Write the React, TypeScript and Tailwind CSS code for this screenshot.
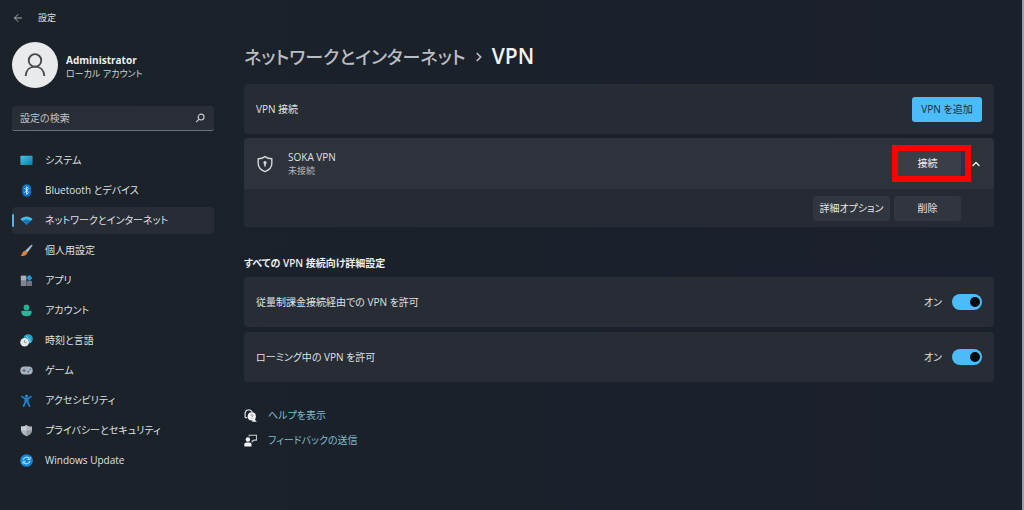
import React, { useState } from 'react';
import { ArrowLeft, ChevronRight, ChevronUp } from 'lucide-react';

type PageId = 'system' | 'bluetooth' | 'network' | 'personal' | 'apps' | 'accounts' | 'time' | 'game' | 'access' | 'privacy' | 'update';

/* ---- Icons ---- */

const Icon: React.FC<{ children: React.ReactNode }> = ({ children }) => (
  <svg viewBox="0 0 16 16" className="w-[13px] h-[13px] shrink-0" aria-hidden="true">{children}</svg>
);

const navItems: { id: PageId; label: string; icon: React.ReactNode }[] = [
  {
    id: 'system',
    label: 'システム',
    icon: (
      <Icon>
        <defs>
          <linearGradient id="screen" x1="0" y1="0" x2="1" y2="1">
            <stop offset="0" stopColor="#45c8e6" />
            <stop offset="1" stopColor="#1577a8" />
          </linearGradient>
        </defs>
        <rect x="0.5" y="2" width="15" height="11.5" rx="1" fill="url(#screen)" />
      </Icon>
    ),
  },
  {
    id: 'bluetooth',
    label: 'Bluetooth とデバイス',
    icon: (
      <Icon>
        <rect x="2.7" y="0.3" width="11" height="15.4" rx="5.5" fill="#0f74d4" />
        <path d="M5.7 5.2 10.5 10.4 8.2 12.8V3.2L10.5 5.6 5.7 10.8" fill="none" stroke="#c9ecff" strokeWidth="1.2" />
      </Icon>
    ),
  },
  {
    id: 'network',
    label: 'ネットワークとインターネット',
    icon: (
      <Icon>
        <path d="M0.5 6.3C4.8 1.9 11.2 1.9 15.5 6.3L12.8 9C10 6.4 6 6.4 3.2 9Z" fill="#41bbe9" />
        <path d="M3.2 9C6 6.4 10 6.4 12.8 9L8 13.7Z" fill="#1679b5" />
      </Icon>
    ),
  },
  {
    id: 'personal',
    label: '個人用設定',
    icon: (
      <Icon>
        <path d="M14 0.9C15.2 0.6 15.7 1.6 15.1 2.6L9.2 10.5 6.3 8.3Z" fill="#a9bccb" />
        <path d="M6.3 8.3 9.2 10.5C8.6 13.8 5.3 15.3 0.6 14.8 2.7 13.5 2.6 8.8 6.3 8.3Z" fill="#d9813b" />
      </Icon>
    ),
  },
  {
    id: 'apps',
    label: 'アプリ',
    icon: (
      <Icon>
        <rect x="1" y="2" width="6.8" height="6.4" fill="#aab0b8" />
        <rect x="1" y="8.4" width="6.8" height="6.4" fill="#7e858e" />
        <rect x="8" y="8.4" width="6.8" height="6.4" fill="#6c747e" />
        <path d="M11.4 0.8 15.4 4.8 11.4 8.6 7.7 4.8Z" fill="#2695d8" />
      </Icon>
    ),
  },
  {
    id: 'accounts',
    label: 'アカウント',
    icon: (
      <Icon>
        <circle cx="8" cy="4.2" r="3.5" fill="#25b08f" />
        <path d="M1.6 9.6Q1.6 8.4 2.8 8.4H13.2Q14.4 8.4 14.4 9.6C14.4 13.3 11.7 15.2 8 15.2S1.6 13.3 1.6 9.6Z" fill="#2bb697" />
      </Icon>
    ),
  },
  {
    id: 'time',
    label: '時刻と言語',
    icon: (
      <Icon>
        <circle cx="10" cy="6" r="5.8" fill="#28a3c8" />
        <path d="M7.4 2.4C9.8 4.2 12.3 7 12.8 10.6" fill="none" stroke="#8de0ef" strokeWidth="1.2" />
        <circle cx="5.7" cy="10.2" r="5.3" fill="#e3e9ed" />
        <path d="M5.6 7.6V10.5H8" fill="none" stroke="#7c8894" strokeWidth="1" />
      </Icon>
    ),
  },
  {
    id: 'game',
    label: 'ゲーム',
    icon: (
      <Icon>
        <rect x="0.4" y="3" width="15.2" height="10" rx="5" fill="#a9b3bf" />
        <path d="M5 5.8V10.2M2.8 8H7.2" stroke="#5a6673" strokeWidth="1.2" />
        <circle cx="10.2" cy="9.4" r="1.1" fill="#5a6673" />
        <circle cx="12.4" cy="6.7" r="1.1" fill="#2d87bd" />
      </Icon>
    ),
  },
  {
    id: 'access',
    label: 'アクセシビリティ',
    icon: (
      <Icon>
        <circle cx="8" cy="2.6" r="2" fill="#1d86cf" />
        <path d="M2.6 3.2 6.4 5.8H9.6L13.4 3.2M8 6V9.5M6.6 6V9.8L4.4 15M9.4 6V9.8L11.6 15" fill="none" stroke="#1d86cf" strokeWidth="2.1" strokeLinecap="round" />
      </Icon>
    ),
  },
  {
    id: 'privacy',
    label: 'プライバシーとセキュリティ',
    icon: (
      <Icon>
        <path d="M8 1.2C9.8 2.6 12 3.1 14.8 3.1V7.2C14.8 11 12 13.6 8 15 4 13.6 1.2 11 1.2 7.2V3.1C4 3.1 6.2 2.6 8 1.2Z" fill="#b1b5ba" />
        <path d="M8 1.2C6.2 2.6 4 3.1 1.2 3.1V8H8Z" fill="#c9ccd0" />
        <path d="M8 8H14.7C14.2 11.4 11.8 13.7 8 15Z" fill="#969ba1" />
      </Icon>
    ),
  },
  {
    id: 'update',
    label: 'Windows Update',
    icon: (
      <Icon>
        <circle cx="8" cy="8" r="7.8" fill="#1786d8" />
        <path d="M4 7.3A4.1 4.1 0 0 1 11.5 5.8M12 8.7A4.1 4.1 0 0 1 4.5 10.2" fill="none" stroke="#a5e2ff" strokeWidth="1.5" />
        <path d="M12.4 3.6V6.8H9.2M3.6 12.4V9.2H6.8" fill="none" stroke="#a5e2ff" strokeWidth="1.2" />
      </Icon>
    ),
  },
];

/* ---- Sub-components ---- */

const Sidebar: React.FC<{ active: PageId; onSelect: (id: PageId) => void }> = ({ active, onSelect }) => (
  <aside className="w-[202px] shrink-0">
    <div className="flex items-center gap-2 h-[46px]">
      <div className="w-[46px] h-[46px] rounded-full bg-[#e9eaeb] flex items-center justify-center shrink-0">
        <svg viewBox="0 0 24 26" className="w-[22px] h-[24px]" fill="none" stroke="#45484c" strokeWidth="2" aria-hidden="true">
          <circle cx="12" cy="8" r="6.8" />
          <path d="M1.8 25C2.2 18.6 6.2 14.8 12 14.8S21.8 18.6 22.2 25" />
        </svg>
      </div>
      <div className="pt-1 leading-[13px]">
        <p className="text-[10px] font-bold text-[#eceef0]">Administrator</p>
        <p className="text-[9px] text-[#cfd2d5]">ローカル アカウント</p>
      </div>
    </div>

    <div className="mt-[18px] h-[25px] flex items-center px-2 rounded-[3px] bg-[#282d36] border-b border-[#6d737b]">
      <input
        type="search"
        aria-label="設定の検索"
        placeholder="設定の検索"
        className="flex-1 min-w-0 bg-transparent text-[10px] text-[#d6d8db] placeholder:text-[#c2c5c9] outline-none"
      />
      <svg viewBox="0 0 12 12" className="w-[12px] h-[12px]" fill="none" stroke="#c6cacf" strokeWidth="1.2" aria-hidden="true">
        <circle cx="7.1" cy="5.1" r="2.9" />
        <path d="M5 7.2 2.2 10.2" />
      </svg>
    </div>

    <nav className="mt-4 flex flex-col gap-[3px]">
      {navItems.map(item => (
        <button
          key={item.id}
          onClick={() => onSelect(item.id)}
          className={`relative h-[27px] flex items-center gap-3 pl-2 rounded text-left text-[10px] whitespace-nowrap ${
            item.id === active ? 'bg-[#282c35]' : 'hover:bg-[#232932]'
          }`}
        >
          {item.id === active && <span className="absolute left-0 top-[7px] w-[2px] h-[13px] rounded bg-[#55b4e6]" />}
          {item.icon}
          <span>{item.label}</span>
        </button>
      ))}
    </nav>
  </aside>
);

const SwitchRow: React.FC<{ id: string; label: string }> = ({ id, label }) => {
  const [on, setOn] = useState(true);
  return (
    <div className="h-[50px] flex items-center pl-3 pr-3 rounded bg-[#272c35]">
      <label htmlFor={id} className="flex-1 text-[10px]">{label}</label>
      <span className="mr-[10px] text-[10px]">{on ? 'オン' : 'オフ'}</span>
      <input
        id={id}
        type="checkbox"
        role="switch"
        checked={on}
        onChange={e => setOn(e.target.checked)}
        className="appearance-none w-[30px] h-[16px] p-[2px] rounded-full bg-[#6b727b] checked:bg-[#4cbcf8] flex items-center checked:justify-end before:block before:w-[10px] before:h-[10px] before:rounded-full before:bg-[#05080c]"
      />
    </div>
  );
};

const subtleButton = 'h-[25px] rounded-[3px] bg-[#31353e] text-[10px] text-[#e4e6e8]';

export default function App() {
  const [active, setActive] = useState<PageId>('network');
  const [expanded, setExpanded] = useState(true);

  return (
    <div className="min-h-screen pl-3 border-r-2 border-[#99a1aa] bg-linear-to-r from-[#1b2229] to-[#1b202d] text-[#dfe1e3] font-['Open_Sans','Noto_Sans_CJK_JP',sans-serif] [font-feature-settings:'palt']">
      {/* Title bar */}
      <header className="h-[36px] flex items-center gap-[14px]">
        <button aria-label="戻る" className="text-[#a9aeb3]">
          <ArrowLeft size={12} strokeWidth={2} />
        </button>
        <span className="text-[9px]">設定</span>
      </header>

      <div className="flex gap-[30px] pr-[28px] pt-[6px] pb-4">
        <Sidebar active={active} onSelect={setActive} />

        <main className="flex-1 min-w-0">
          <h1 className="h-[30px] flex items-center font-semibold whitespace-nowrap">
            <a href="#network" className="text-[18px] font-medium text-[#b9bdc1]">ネットワークとインターネット</a>
            <ChevronRight size={14} strokeWidth={3} className="mx-[6px] text-[#b9bdc1]" />
            <span className="text-[21px] text-[#f1f2f3]">VPN</span>
          </h1>

          {/* Connections */}
          <section className="mt-3 h-[50px] flex items-center justify-between px-3 rounded bg-[#272c34]">
            <h2 className="text-[10px]">VPN 接続</h2>
            <button className="w-[70px] h-[25px] rounded-[3px] bg-[#4cbcf8] text-[10px] text-[#12303f]">VPN を追加</button>
          </section>

          <section className="mt-1 rounded overflow-hidden bg-[#262a34]">
            <div className="h-[51px] flex items-center pl-3 pr-3 bg-[#2d323b]">
              <svg viewBox="0 0 18 18" className="w-[18px] h-[18px]" fill="none" stroke="#d5d8da" strokeWidth="1.4" aria-hidden="true">
                <path d="M9 1.6C11 3 13.2 3.7 15.8 3.8V8.6C15.8 12.4 13.4 15 9 16.6 4.6 15 2.2 12.4 2.2 8.6V3.8C4.8 3.7 7 3 9 1.6Z" />
                <circle cx="9" cy="7.7" r="1.6" fill="#d5d8da" stroke="none" />
                <path d="M9 8V11.6" strokeWidth="1.6" />
              </svg>
              <div className="ml-[14px] flex-1 leading-[13px]">
                <h3 className="text-[10px]">SOKA VPN</h3>
                <p className="text-[9px] text-[#b4b8bc]">未接続</p>
              </div>
              <div className="relative flex">
                <button className="w-[67px] h-[25px] rounded-[3px] bg-[#3a3f47] text-[10px] text-[#f0f1f2]">接続</button>
                <span className="absolute -top-[6px] -bottom-[6px] -left-[2px] -right-[10px] border-[6px] border-[#fe0000] pointer-events-none" />
              </div>
              <button aria-label="詳細" aria-expanded={expanded} onClick={() => setExpanded(!expanded)} className="ml-[9px]">
                <ChevronUp size={12} strokeWidth={3} />
              </button>
            </div>
            {expanded && (
              <div className="h-[38px] flex items-center justify-end gap-1 pr-[33px]">
                <button className={`w-[77px] ${subtleButton}`}>詳細オプション</button>
                <button className={`w-[67px] ${subtleButton}`}>削除</button>
              </div>
            )}
          </section>

          {/* Advanced */}
          <h2 className="mt-7 mb-[6px] text-[10px] leading-4 font-semibold text-[#eceef0]">すべての VPN 接続向け詳細設定</h2>
          <div className="flex flex-col gap-[5px]">
            <SwitchRow id="metered" label="従量制課金接続経由での VPN を許可" />
            <SwitchRow id="roaming" label="ローミング中の VPN を許可" />
          </div>

          <div className="mt-[25px] flex flex-col items-start gap-[9px] text-[10px] leading-4 text-[#80bccb]">
            <a href="#help" className="flex items-center gap-[11px]">
              <svg viewBox="0 0 14 14" className="w-[13px] h-[13px]" aria-hidden="true">
                <path d="M1.2 9.2V5.2A4 4 0 0 1 8.8 3.2M1 9.2H3.6" fill="none" stroke="#d9dcdf" strokeWidth="1.3" />
                <circle cx="8.4" cy="8" r="4.4" fill="#f0f2f3" />
                <path d="M10.5 10 13.8 13.6H8.5Z" fill="#f0f2f3" />
                <path d="M7.4 7.2A1.1 1.1 0 1 1 8.5 8.3V9M8.5 9.8V10.5" fill="none" stroke="#6b7178" strokeWidth="0.8" />
              </svg>
              ヘルプを表示
            </a>
            <a href="#feedback" className="flex items-center gap-[11px]">
              <svg viewBox="0 0 14 14" className="w-[13px] h-[13px]" aria-hidden="true">
                <circle cx="4.2" cy="6" r="2.4" fill="#f0f2f3" />
                <path d="M0.4 13.4V11Q0.4 9.1 2.4 9.1H6Q8 9.1 8 11V13.4Z" fill="#f0f2f3" />
                <path d="M5.6 2.8V1.4H13.4V6.6H10.8L8.8 8.4V6.6" fill="none" stroke="#c9cdd1" strokeWidth="1.1" />
              </svg>
              フィードバックの送信
            </a>
          </div>
        </main>
      </div>
    </div>
  );
}
